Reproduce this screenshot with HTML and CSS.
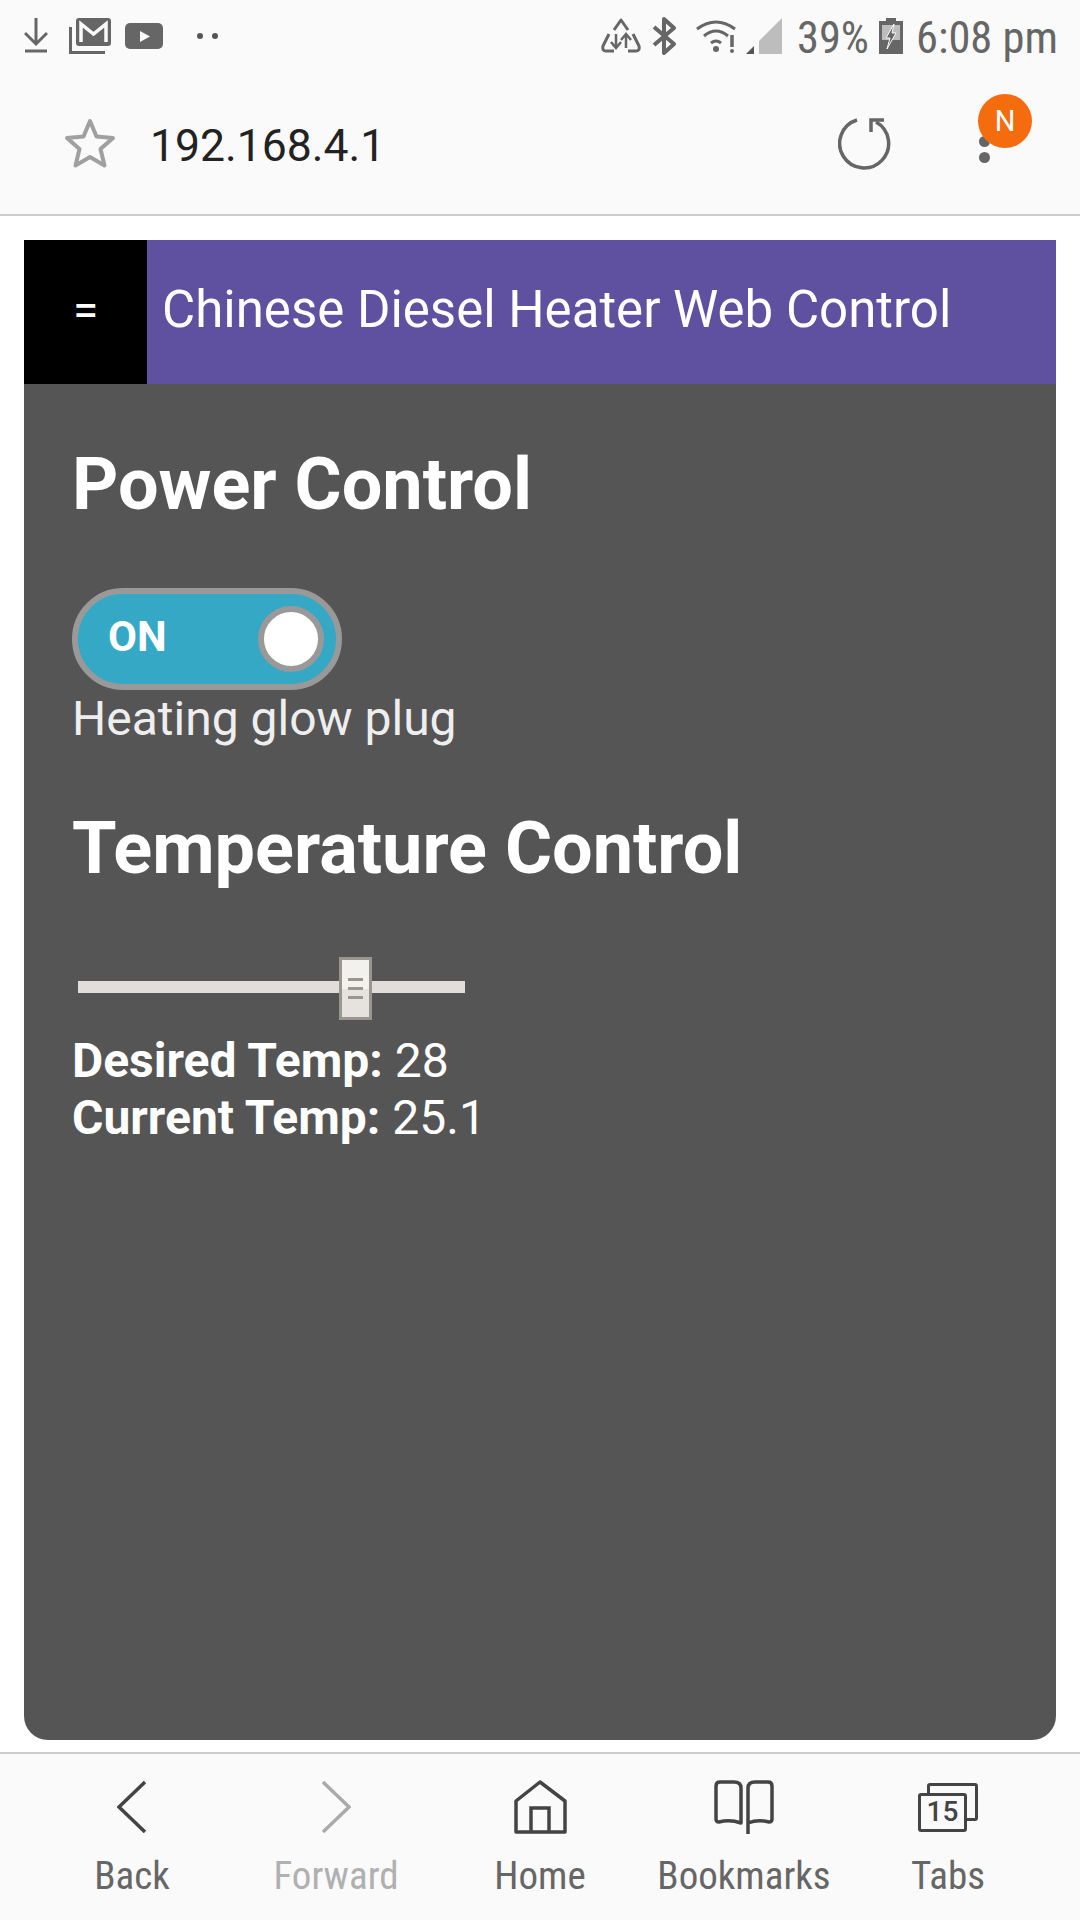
FILE: index.html
```html
<!DOCTYPE html>
<html lang="en">
<head>
    <meta charset="UTF-8">
    <meta name="viewport" content="width=device-width, initial-scale=1.0">
    <title>Chinese Diesel Heater Web Control</title>
    <link rel="stylesheet" href="styles.css">
</head>
<body>
    <div id="browserTop">
        <div id="statusBar">
            <div class="statusGroup">
                <svg class="sIcon" width="24" height="36" viewBox="0 0 24 36"><path d="M12 0V26M1 15L12 26L23 15" fill="none" stroke="#666" stroke-width="3"/><path d="M1 33H23" stroke="#666" stroke-width="3"/></svg>
                <svg class="sIcon gmail" width="42" height="36" viewBox="0 0 42 36"><path d="M1.500 9V34.500H36" fill="none" stroke="#666" stroke-width="3"/><rect x="7" y="0" width="35" height="28" rx="3" fill="#666"/><path d="M12 24V6L24.500 16L37 6V24" fill="none" stroke="#fafafa" stroke-width="3.500"/></svg>
                <svg class="sIcon" width="38" height="26" viewBox="0 0 38 26"><rect width="38" height="26" rx="5" fill="#666"/><path d="M15 8V19L25 13.500Z" fill="#fafafa"/></svg>
                <svg class="sIcon moreDots" width="22" height="8" viewBox="0 0 22 8"><circle cx="4" cy="4" r="3" fill="#555"/><circle cx="19" cy="4" r="3" fill="#555"/></svg>
            </div>
            <div class="statusGroup rightGroup">
                <svg class="sIcon" width="40" height="36" viewBox="0 0 40 36"><g fill="none" stroke="#666" stroke-width="3" stroke-linejoin="round"><path d="M13 12L20 2L27 12"/><path d="M8 16L2 28Q1 33 5 33H13"/><path d="M32 16L38 28Q39 33 35 33H27"/></g><path d="M15 16V30M10 24L15 30L20 24" fill="none" stroke="#666" stroke-width="2.500"/><path d="M25 30V16M20 22L25 16L30 22" fill="none" stroke="#666" stroke-width="2.500"/></svg>
                <svg class="sIcon bluetooth" width="24" height="38" viewBox="0 0 24 38"><path d="M2 10L22 27L12 36V2L22 11L2 28" fill="none" stroke="#666" stroke-width="4" stroke-linejoin="round"/></svg>
                <svg class="sIcon wifi" width="42" height="34" viewBox="0 0 42 34"><g fill="none" stroke="#666" stroke-width="3"><path d="M1 10Q20 -4 39 10"/><path d="M8 17Q20 7 32 17"/><path d="M15 24Q20 20 25 24"/></g><circle cx="20" cy="30" r="3" fill="#666"/><path d="M36 16V28" stroke="#666" stroke-width="3.500"/><circle cx="36" cy="32" r="2" fill="#666"/></svg>
                <svg class="sIcon signal" width="36" height="36" viewBox="0 0 36 36"><path d="M0 36L8 28V36Z" fill="#555"/><path d="M13 36V23L36 0V36Z" fill="#bdbdbd"/></svg>
                <span class="statusText percent">39%</span>
                <svg class="sIcon battery" width="24" height="36" viewBox="0 0 24 36"><path d="M7 0H17V3H24V36H0V3H7Z" fill="#666"/><rect x="3" y="7" width="18" height="15" fill="#bdbdbd"/><path d="M15 6L7 20H11L8 31L17 15H13Z" fill="#666" stroke="#fafafa" stroke-width="1"/></svg>
                <span class="statusText">6:08 pm</span>
            </div>
        </div>
        <div id="urlBar">
            <svg class="star" width="52" height="52" viewBox="0 0 52 52"><path d="M26 3L32.500 18.500L49 20L36.500 31L40.500 47.500L26 39L11.500 47.500L15.500 31L3 20L19.500 18.500Z" fill="none" stroke="#a0a0a0" stroke-width="4" stroke-linejoin="round"/></svg>
            <span id="urlText">192.168.4.1</span>
            <svg class="reload" width="56" height="54" viewBox="0 0 56 54"><path d="M19 3A24.500 24.500 0 1 0 38 5" fill="none" stroke="#666" stroke-width="3.500"/><path d="M46 3H33V15" fill="none" stroke="#666" stroke-width="3.500"/></svg>
            <div id="menuBtn">
                <span class="dot"></span>
                <span class="dot"></span>
                <span id="badge">N</span>
            </div>
        </div>
    </div>

    <div id="page">
        <div id="titleDiv">
            <div id="menuToggle">=</div>
            <div id="pageTitle">Chinese Diesel Heater Web Control</div>
        </div>
        <div id="panel">
            <h2 class="powerHead">Power Control</h2>
            <div class="toggle">
                <span class="toggleText">ON</span>
                <span class="knob"></span>
            </div>
            <p class="toggleLabel">Heating glow plug</p>
            <h2 class="tempHead">Temperature Control</h2>
            <div class="slider">
                <div class="handle">
                    <span></span><span></span><span></span>
                </div>
            </div>
            <p class="reading"><b>Desired Temp:</b> 28</p>
            <p class="reading"><b>Current Temp:</b> 25.1</p>
        </div>
    </div>

    <div id="bottomBar">
        <div class="navItem">
            <svg width="30" height="54" viewBox="0 0 30 54"><path d="M28 2L2 27L28 52" fill="none" stroke="#444" stroke-width="3.500"/></svg>
            <span>Back</span>
        </div>
        <div class="navItem disabled">
            <svg width="30" height="54" viewBox="0 0 30 54"><path d="M2 2L28 27L2 52" fill="none" stroke="#aaa" stroke-width="3.500"/></svg>
            <span>Forward</span>
        </div>
        <div class="navItem">
            <svg width="54" height="54" viewBox="0 0 54 54"><path d="M27 2L52 21V52H3V21Z" fill="none" stroke="#444" stroke-width="3.500" stroke-linejoin="round"/><path d="M18 52V28H36V52" fill="none" stroke="#444" stroke-width="3.500"/></svg>
            <span>Home</span>
        </div>
        <div class="navItem">
            <svg width="60" height="54" viewBox="0 0 60 54"><path d="M27 43Q16 39 5 42Q2 42 2 39V6Q2 2 6 2H20Q27 2 27 8Z" fill="none" stroke="#444" stroke-width="3.500" stroke-linejoin="round"/><path d="M34 54V8Q34 2 41 2H54Q58 2 58 6V39Q58 42 55 42Q44 39 34 43" fill="none" stroke="#444" stroke-width="3.500" stroke-linejoin="round"/></svg>
            <span>Bookmarks</span>
        </div>
        <div class="navItem">
            <div class="tabsIcon">
                <span class="tabBack"></span>
                <span class="tabFront">15</span>
            </div>
            <span>Tabs</span>
        </div>
    </div>
</body>
</html>
```
FILE: styles.css
```css
* {
    box-sizing: border-box;
}
body {
    margin: 0;
    width: 1080px;
    height: 1920px;
    display: flex;
    flex-direction: column;
    font-family: Roboto, "Liberation Sans", sans-serif;
    background-color: white;
    color: white;
    overflow: hidden;
}
svg {
    display: block;
}

/* Browser chrome */
#browserTop {
    height: 216px;
    background-color: #fafafa;
    border-bottom: 2px solid #ccc;
}
#statusBar {
    height: 72px;
    padding: 0 22px 0 24px;
    display: flex;
    justify-content: space-between;
    align-items: center;
}
.statusGroup {
    display: flex;
    align-items: center;
    gap: 14px;
}
.gmail {
    margin-left: 7px;
}
.moreDots {
    margin-left: 19px;
}
.rightGroup {
    gap: 13px;
}
.bluetooth {
    margin-left: -2px;
}
.wifi {
    margin-left: 7px;
}
.signal {
    margin-left: -5px;
}
.percent {
    margin-left: 2px;
    margin-right: -3px;
}
.statusText {
    font-size: 44.500px;
    font-stretch: condensed;
    color: #666;
    white-space: nowrap;
    padding-top: 4px;
}
#urlBar {
    height: 142px;
    display: flex;
    align-items: center;
    padding: 0 90px 0 64px;
}
.star {
    margin-right: 34px;
    margin-top: 2px;
}
#urlText {
    flex: 1;
    font-size: 44.500px;
    color: #222;
    padding-top: 6px;
}
.reload {
    margin-right: 85px;
    margin-top: 2px;
}
#menuBtn {
    width: 11px;
    display: flex;
    flex-direction: column;
    gap: 5px;
    position: relative;
    margin-top: 12px;
}
.dot {
    width: 11px;
    height: 11px;
    border-radius: 50%;
    background-color: #666;
}
#badge {
    position: absolute;
    left: -1px;
    top: -42px;
    width: 54px;
    height: 54px;
    border-radius: 50%;
    background-color: #f56c0f;
    color: white;
    font-size: 29px;
    display: flex;
    align-items: center;
    justify-content: center;
}

/* Page */
#page {
    flex: 1;
    padding: 24px 24px 12px;
    display: flex;
    flex-direction: column;
}
#titleDiv {
    height: 144px;
    display: flex;
    background-color: #5f50a0;
}
#menuToggle {
    width: 123px;
    background-color: black;
    font-size: 46px;
    padding-bottom: 4px;
    display: flex;
    align-items: center;
    justify-content: center;
}
#pageTitle {
    font-size: 51px;
    line-height: 140px;
    padding-left: 15px;
    white-space: nowrap;
}
#panel {
    flex: 1;
    background-color: #555;
    border-radius: 0 0 24px 24px;
    padding: 59px 48px 0;
}
h2 {
    margin: 0;
    font-size: 72px;
    font-weight: 700;
    line-height: 84px;
}
.toggle {
    width: 270px;
    height: 102px;
    margin-top: 61px;
    background-color: #34a8c4;
    border: 6px solid #999;
    border-radius: 51px;
    display: flex;
    align-items: center;
    justify-content: space-between;
    padding: 0 12px 0 30px;
}
.toggleText {
    font-size: 42px;
    font-weight: 700;
    padding-bottom: 6px;
}
.knob {
    width: 66px;
    height: 66px;
    border-radius: 50%;
    background-color: white;
    border: 6px solid #999;
}
.toggleLabel {
    margin: 1px 0 0;
    font-size: 48px;
    line-height: 56px;
    color: #eee;
}
.tempHead {
    margin-top: 60px;
}
.slider {
    width: 387px;
    height: 12px;
    margin: 90px 0 39px 6px;
    background-color: #e2ddd8;
    position: relative;
}
.handle {
    position: absolute;
    left: 261px;
    top: -24px;
    width: 33px;
    height: 63px;
    border: 3px solid #9a958e;
    background: linear-gradient(#f3f1ed 50%, #e6e2de 50%);
    display: flex;
    flex-direction: column;
    align-items: center;
    justify-content: center;
    gap: 6px;
}
.handle span {
    width: 15px;
    height: 3px;
    background-color: #9a958e;
}
.reading {
    margin: 0;
    font-size: 48px;
    line-height: 57px;
}
.reading b {
    font-weight: 700;
}

/* Bottom bar */
#bottomBar {
    height: 168px;
    background-color: #fafafa;
    border-top: 2px solid #ccc;
    padding: 26px 30px 0;
    display: grid;
    grid-template-columns: repeat(5, 204px);
}
.navItem {
    display: flex;
    flex-direction: column;
    align-items: center;
    font-size: 39px;
    font-stretch: condensed;
    color: #666;
}
.navItem span {
    margin-top: 19px;
    white-space: nowrap;
}
.navItem.disabled {
    color: #b0b0b0;
}
.tabsIcon {
    width: 60px;
    height: 54px;
    position: relative;
}
.tabsIcon span {
    margin: 0;
}
.tabBack {
    position: absolute;
    left: 9px;
    top: 3px;
    width: 51px;
    height: 38px;
    border: 3.500px solid #444;
    border-radius: 3px;
}
.tabFront {
    position: absolute;
    left: 0;
    top: 13px;
    width: 49px;
    height: 39px;
    border: 3.500px solid #444;
    border-radius: 3px;
    background-color: #fafafa;
    color: #444;
    font-size: 28px;
    font-stretch: normal;
    font-weight: 500;
    line-height: 32px;
    text-align: center;
}
```
